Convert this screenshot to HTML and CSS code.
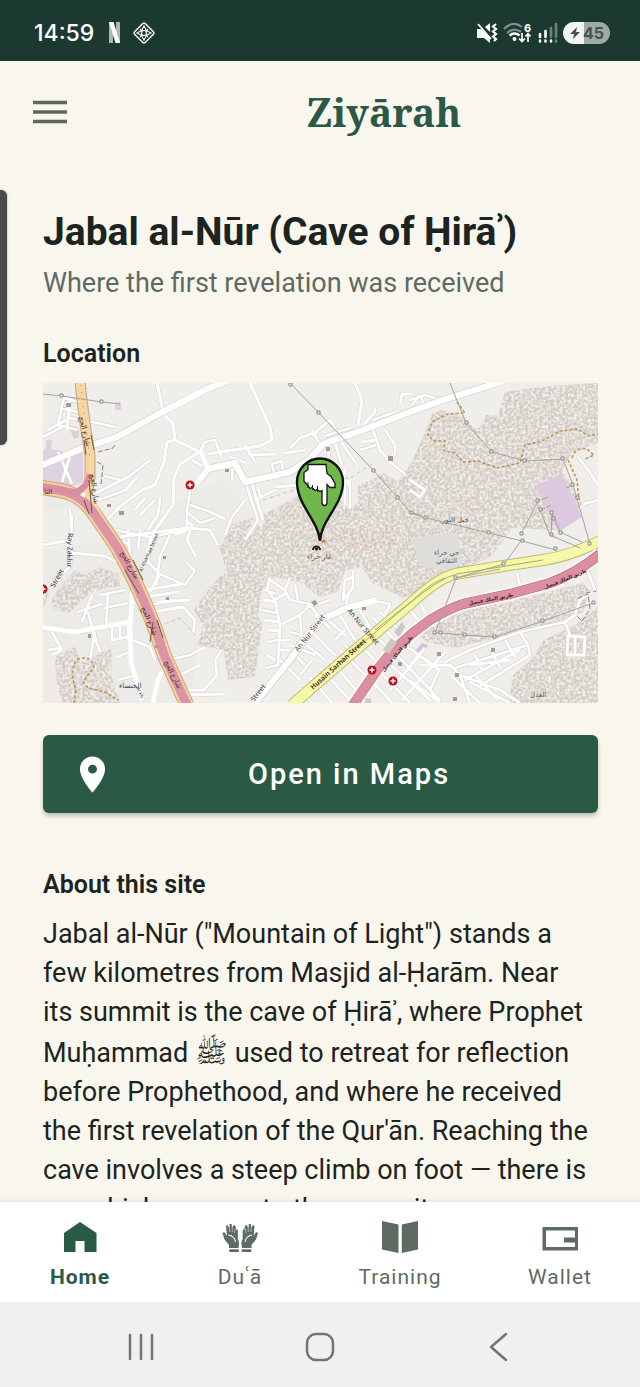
FILE: index.html
```html
<!DOCTYPE html>
<html lang="en">
<head>
<meta charset="utf-8">
<meta name="viewport" content="width=device-width, initial-scale=1">
<title>Ziyārah</title>
<link rel="stylesheet" href="styles.css">
</head>
<body>
<div class="status">
  <div class="status-side">
    <span class="clock">14:59</span>
    <svg class="ico-brand" width="14" height="24" viewBox="0 0 14 24" aria-hidden="true"><rect x="1" y="1" width="4" height="21" fill="#a9b6b2"/><rect x="8" y="1" width="4" height="21" fill="#a9b6b2"/><path d="M1 1h4.500L12 22H7.500z" fill="#fff"/></svg>
    <svg width="24" height="24" viewBox="0 0 24 24" fill="none" stroke="#f1f5f3" aria-hidden="true"><rect x="4.500" y="4.500" width="15" height="15" rx="2" transform="rotate(45 12 12)" stroke-width="1.500"/><path d="M12 5l2.500 4.500L19 12l-4.500 2.500L12 19l-2.500-4.500L5 12l4.500-2.500zM8 8l8 8M16 8l-8 8" stroke-width="1.100"/><circle cx="12" cy="12" r="2.500" fill="#1b3930" stroke-width="1.200"/></svg>
  </div>
  <div class="status-side status-right">
    <svg width="22" height="22" viewBox="0 0 22 22" aria-hidden="true"><path d="M1 7h4l9 9v5l-6-5H1z M9 5l5-4v9z" fill="#fff"/><path d="M2 2l13 15" stroke="#fff" stroke-width="1.800"/><path d="M20 2l-3 2.500 3 2.500-3 2.500 3 2.500-3 2.500 3 2.500-2 2" stroke="#fff" stroke-width="2.200" fill="none"/></svg>
    <svg width="30" height="24" viewBox="0 0 30 24" fill="none" aria-hidden="true"><path d="M1 8q9-9 18-2M4 12q7-6 14-1" stroke="#7c918b" stroke-width="2.200"/><path d="M6.500 14.500q5-4 10 0" stroke="#fff" stroke-width="2.400"/><circle cx="11.500" cy="18" r="2" fill="#fff"/><path d="M19 12v8m-3-2.500l3 3 3-3M25 21v-8m-2.500 2.500l2.500-3 2.500 3" stroke="#fff" stroke-width="1.700"/><text class="wifi-gen" x="21" y="11">6</text></svg>
    <svg width="20" height="22" viewBox="0 0 20 22" stroke-width="2.600" stroke-linecap="round" aria-hidden="true"><path d="M2 12v3M7.500 9v6" stroke="#fff"/><path d="M13 6v9M18 2v13" stroke="#6b827b"/><path d="M2 18.500v1M7.500 18.500v1M13 18.500v1" stroke="#fff"/><path d="M18 18.500v1" stroke="#6b827b"/></svg>
    <span class="battery"><svg width="12" height="14" viewBox="0 0 12 14" aria-hidden="true"><path d="M8 1L1 8h4l-1 5 7-7H7z" fill="#4c504e"/></svg>45</span>
  </div>
</div>

<header class="topbar">
  <button class="menu" type="button" aria-label="Menu"><svg width="34" height="24" viewBox="0 0 34 24"><path d="M0 2.500h34M0 12h34M0 21.500h34" stroke="#5a695f" stroke-width="3.500"/></svg></button>
  <h1 class="brand">Ziyārah</h1>
</header>
<div class="edge-handle"></div>

<main class="page">
  <h2 class="title">Jabal al-Nūr (Cave of Ḥirāʾ)</h2>
  <p class="subtitle">Where the first revelation was received</p>
  <h3 class="section">Location</h3>
  <svg class="map" viewBox="43 383 555 320" role="img" aria-label="Map of Jabal al-Nur">
    <defs>
      <filter id="rock" x="0" y="0" width="100%" height="100%">
        <feTurbulence type="fractalNoise" baseFrequency=".35" numOctaves="2" seed="4" result="n"/>
        <feColorMatrix in="n" values="0 0 0 0 .88  0 0 0 0 .855  0 0 0 0 .83  3 0 0 0 -1.100" result="c"/>
        <feComposite in="c" in2="SourceGraphic" operator="in" result="d"/>
        <feMerge><feMergeNode in="SourceGraphic"/><feMergeNode in="d"/></feMerge>
      </filter>
      <path id="redroad" d="M353 705L377 670Q398 642 430 620Q450 608 463 604L510 594L550 583Q575 574 600 554"/>
      <path id="yellowroad" d="M292 705L353 652L410 604Q438 578 455 574L503 566L543 560Q570 556 600 541"/>
      <path id="ring" d="M40 487L63 491Q82 496 93 512L117 547Q137 583 153 623L165 657L187 705"/>
      <g id="clinic"><circle r="4.500" fill="#b5121b"/><path d="M-2.500 0h5M0-2.500v5" stroke="#fff" stroke-width="1.500"/></g>
    </defs>
    <path d="M43 383h555v320H43z" fill="#f0eeea"/>
    <path d="M43 430h40v80h-40zM43 550l70-10 30 50 45 113H43zM180 500l40-20 40 40-60 110-10 73h-25l-50-150z" fill="#ecebe7"/>
    <g fill="#d3cbc4" filter="url(#rock)">
      <path d="M220 548L232 524L252 518L262 530L264 514L300 495L338 497L350 510L358 502V486L384 473L398 482L412 462L426 430L432 414L442 410L462 416L478 432L486 415H498L505 392L550 386L598 383V443L572 452L562 470L582 504L560 530L512 528L492 556L460 570L430 585L404 598L372 583L362 567L345 570L338 592L318 597L303 583L275 577L262 590L258 615L262 625L255 677L228 680L224 650L198 645L203 625L194 610L208 590L226 570Z"/>
      <path d="M415 634L435 622L470 608L540 594L583 583L590 591L583 612L556 622L520 632L488 640L455 648L428 642Z"/>
      <path d="M598 606L577 624L544 640L530 661L513 675L509 703H598Z"/>
      <path d="M58 590L75 570L85 575L100 567L118 574L120 586L104 588L92 592L80 602L69 613L54 610L52 600Z"/>
      <path d="M55 657L75 646L80 662L95 656L112 648L111 675L120 703H63L57 686Z"/>
      <path d="M43 583l8 8-8 16z"/>
    </g>
    <path d="M43 450h16l14 6 10 -8v34q-10 5 -18 5h-22zM46 440h6l-1 10h-5zM115 402h6v8h-6z" fill="#ddd2e0"/>
    <path d="M536 485L562 474L582 517L558 532Z" fill="#dcc9df"/>
    <path d="M414 652l8-9 6 2-8 12z" fill="#d2c4dc"/>
    <path d="M412 540l20-5 26-1 4 28-12 10-30-6z" fill="#dfddda"/>
    <path d="M68 425l6 14 5-2v-9z" fill="#d9d0cc"/>

    <g fill="none" stroke="#d5d2cf" stroke-width="4" stroke-linejoin="round">
      <path id="streets" d="M157 383L163 412M162 412L173 424L175 440L200 452M175 440L167 442L164 462L155 485L142 490L118 508L107 520M200 452L180 464L174 478L173 505L155 530L147 552M197 476L190 490L187 512L200 523L215 518M190 505L208 511L225 519M187 512L187 530L175 535M187 528L120 537M187 528L210 530L218 545M55 395L78 402M60 408L78 412M64 396L58 425L78 430M70 398L67 430M48 430L70 418L80 420M43 437L62 427M58 452L72 484M72 450L62 482M83 420L115 427M96 493L128 477L150 460M98 500L126 490L137 477M104 476L120 480M135 510L145 498M160 497L158 515L148 530M140 515L155 500M200 452L205 442L215 440L222 458M208 454L220 452M202 466L192 460M70 510L72 540M43 545L70 540M72 553L104 556M43 590L70 567L72 547M104 556L125 565M72 515L71 548M105 535L130 545M115 530L150 537L186 530M128 530L130 555M140 530L138 550M150 537L148 562L160 574L185 585L195 571L187 563M170 535L160 556L156 585M185 520L192 525L187 540L196 557M160 574L150 592M145 590L182 584M146 597L178 592M149 605L175 600M152 612L183 607L195 620L193 634M157 602L190 600M43 628L80 632L130 622M77 612L102 604M82 622L92 595M88 612L94 635L100 652M95 632L90 660M52 632L62 650L52 655M100 595L125 590M104 608L128 603M108 592L106 628M112 640L133 636M112 627V642M120 622V638M128 622V640M48 650L62 648M118 680L132 676M117 657L130 652M132 640L150 647L155 660M168 660L190 655L205 647M180 675L200 665M185 690L204 690L217 675L215 660L222 650M168 665L158 680M185 695L225 694M250 383L270 427L272 440L260 446L220 452M220 452L248 448L250 455L275 454M245 445L255 462M230 457L246 463M272 464L282 461L283 472M275 476L272 464M285 453L305 450M290 448L300 438L316 432L330 420L336 430M312 430L320 445M330 445L328 460M335 443L342 465M340 440L357 465M325 436L350 428M318 431L312 435M355 383L362 400L358 425M363 425L375 412V408M373 420L395 412M373 430L380 450L387 458L395 455V445L385 430M360 450L376 445M362 442L375 440M385 458L405 474M400 403L402 394H410M246 484L258 520L245 540M252 484L263 520M245 500L232 517L225 535M255 500L275 490M260 496L258 487M245 484L233 465L232 480M275 487L300 485M345 470V505M350 480V508M340 468L350 487M410 400L425 395L435 398L436 406M412 405L420 395M424 408L421 395M410 480L425 490L420 497L410 490M270 577L267 590L275 600L280 625L278 665M265 590L276 594M264 600L276 602M262 610L277 613M264 620L279 622M268 630L279 631M268 642L278 640M267 655L275 660M270 580L285 590L290 600L315 605L330 600M285 590L290 578M298 600L295 585M275 600L287 592M280 625L300 615L310 605L320 618M300 615L302 640M290 632L302 635M290 645L315 655M280 660L300 680M295 655L305 665M300 675L312 660M278 665L265 668M280 640H290M280 650H290M353 570V588L343 600L345 580L353 577M350 590L345 608M370 600L390 604L385 615M355 615L375 645M340 615L355 640M360 610L376 638M328 620L345 635M335 640L345 630M315 615L330 628M310 630L335 655M307 645L325 660M340 650L380 690M330 660L365 700M320 668L350 700M310 677L332 703M300 688L312 703M365 625L385 645M373 618L395 640M380 612L402 632M345 645L355 655M355 640L375 660M385 660L430 700M392 650L440 700M400 642L440 670M380 672L410 703M373 682L392 703M390 690L420 655M402 700L445 652M410 665L425 648M420 665L450 665L460 675L500 690M445 662L470 650L520 632L565 622L570 635M455 668L528 645L520 632M440 668L430 690L440 703M450 675L480 703M460 675L470 703M470 682L510 703M480 686L530 655L528 645M475 655L482 670M490 648L500 667M505 640L515 657M465 680L520 650M470 665L510 660M410 680L440 703M568 635L567 655H584L585 637L568 636M575 637V655M565 622L575 615L580 600L595 590L587 570M517 573L520 586M570 545L598 560M584 504L598 500M578 457L588 470L598 485M420 603L428 618M410 610L420 622M475 675L498 700M500 690L520 703"/>
    </g>
    <g fill="none" stroke-width="2.800" stroke-linejoin="round"><use href="#streets" class="street-fill"/></g>
    <g fill="none" stroke="#fff" stroke-width="2.800" stroke-linejoin="round"><path d="M157 383L163 412M162 412L173 424L175 440L200 452M175 440L167 442L164 462L155 485L142 490L118 508M200 452L180 464L174 478L173 505L155 530L147 552M250 383L270 427L272 440L260 446L220 452M355 383L362 400L358 425"/></g>
    <g fill="none" stroke="#c9c5c2" stroke-width="7.500" stroke-linejoin="round"><path d="M40 466L83 448L117 437L162 412L207 389L227 381M196 484L208 469L235 463L245 482L290 472L310 459L323 444L363 430L410 412L443 400L504 381"/><path d="M253 705L290 660L306 637L322 619L347 608L377 600"/></g>
    <g fill="none" stroke="#fff" stroke-width="6.500" stroke-linejoin="round"><path d="M40 466L83 448L117 437L162 412L207 389L227 381M196 484L208 469L235 463L245 482L290 472L310 459L323 444L363 430L410 412L443 400L504 381"/><path d="M253 705L290 660L306 637L322 619L347 608L377 600"/><path d="M133 588L130 625L131 662L142 700M40 627L75 632L130 622M168 660L158 680L153 703M200 450L208 469" stroke-width="4.500"/></g>

    <g fill="none" stroke-linejoin="round">
      <path d="M80 381L82 400L86 430L90 455V478L87 495" stroke="#bfa582" stroke-width="11"/>
      <use href="#ring" stroke="#c4a882" stroke-width="15"/>
      <use href="#ring" stroke="#f6cf9c" stroke-width="13"/>
      <path d="M80 381L82 400L86 430L90 455V478L87 495L100 520" stroke="#f8d6a3" stroke-width="9"/>
      <use href="#ring" stroke="#dc94a5" stroke-width="9"/>
      <path d="M40 487L75 492Q88 488 90 474" stroke="#d98da0" stroke-width="6"/>
      <path d="M81 385L83 405L87 435L90 460" stroke="#b08a52" stroke-dasharray="1 6"/>
      <path d="M91 435l3 15M84 440l2 15M89 480l3 33M84 500l5 14M125 570l14 24M133 560l10 20M153 622l-3 20M157 620l6 18" stroke="#6b5744" stroke-width="1"/>
      <path d="M80 495l5-3v6z" fill="#fff"/>
      <use href="#yellowroad" stroke="#b9bd71" stroke-width="12"/>
      <use href="#yellowroad" stroke="#f6f7a9" stroke-width="10"/>
      <path d="M340 662L410 603Q440 578 457 574L543 560M375 630L412 601Q430 583 445 578" stroke="#a4af65" stroke-width="1"/>
      <use href="#redroad" stroke="#faf7f5" stroke-width="14"/>
      <use href="#redroad" stroke="#b0667a" stroke-width="10"/>
      <use href="#redroad" stroke="#dc8fa1" stroke-width="9"/>
    </g>

    <g fill="none" stroke="#a7a39f" stroke-width="1">
      <path d="M43 394L62 396L102 402L120 404M290 383L319 413L374 471L398 498L411 513L426 518L489 533L522 541L556 550M450 383L466 423L492 452L525 461L563 459L573 485L590 544M538 501L533 511L521 534M540 510L550 535L580 548M552 513L551 535M552 513L560 532L582 542M521 541L504 564L456 578L435 633L440 633L464 635L495 637L543 621L593 603M411 513L422 515M538 501L548 497M541 510l10-5M566 488l8-3M456 578L500 569"/>
    </g>
    <g fill="#f0ece8" stroke="#8c8885" stroke-width="1">
      <path d="M60 394h3v3h-3zM100 400h3v3h-3zM289 383h3v3h-3zM317 411h3v3h-3zM372 469h3v3h-3zM396 496h3v3h-3zM410 511h3v3h-3zM424 516h3v3h-3zM487 531h3v3h-3zM521 539h3v3h-3zM554 547h3v3h-3zM465 421h3v3h-3zM490 450h3v3h-3zM523 459h3v3h-3zM561 457h3v3h-3zM571 483h3v3h-3zM576 496h3v3h-3zM536 499h3v3h-3zM539 508h3v3h-3zM550 511h3v3h-3zM552 517h3v3h-3zM550 533h3v3h-3zM559 531h3v3h-3zM520 532h3v3h-3zM588 542h3v3h-3zM502 562h3v3h-3zM454 576h3v3h-3zM433 631h3v3h-3zM439 631h3v3h-3zM463 633h3v3h-3zM493 635h3v3h-3zM541 619h3v3h-3zM592 601h3v3h-3z"/>
    </g>
    <g fill="none" stroke="#b99656" stroke-width="1.500" stroke-dasharray="3 2">
      <path d="M457 402L465 413L448 414L432 422L428 435L434 441H445L444 451L455 453L463 462L478 461L497 468L520 463L525 445L542 441L560 431L578 429L588 436L598 434M572 458Q575 447 587 449L594 455L585 459M568 460L577 480L579 500M74 703L76 690Q68 668 78 659Q92 655 94 667L83 682L88 688L105 692L118 700"/>
    </g>
    <g fill="none" stroke="#c9c4bf" stroke-dasharray="4 3"><path d="M263 500L300 488L350 478L375 462M165 624L180 618L195 635M463 431L500 425L560 400"/></g>
    <path d="M98 452l15-4 2 -3M97 462l6 3-2 20M578 598l10-4 2 15-8 12-5-5M586 593l10-2" fill="none" stroke="#85817e" stroke-dasharray="5 2"/>
    <g fill="none" stroke="#e0a69a" stroke-width="1" stroke-dasharray="2 3"><path d="M325 541l20-4 15-5 5 10 20-6 10 8M340 552l12-8 12 7 14-9 20 2M350 534l8 10 14 3M383 545l-10 8"/></g>
    <g fill="#a49b94"><path d="M66 403h5v4h-5zM119 511h5v4h-5zM107 504h4v3h-4zM225 469h4v3h-4zM326 447h4v4h-4zM388 456h5v5h-5zM311 602l4-2 3 4-4 2zM362 607h4v3h-4zM163 556h3v3h-3zM166 597h3v3h-3zM155 645h3v3h-3zM88 634h3v4h-3zM437 652h4v4h-4zM491 648h4v4h-4zM455 673h4v4h-4zM453 697h4v4h-4zM398 662h4v4h-4z"/><path d="M383 650l8-12 6 4-8 12zM394 632l8-10 3 5-6 10zM365 698l6 1v4h-6z" fill="#cfc8c2"/></g>

    <g class="map-label">
      <text transform="translate(79 417) rotate(76)">شارع الحج</text>
      <text transform="translate(90 474) rotate(82)">شارع الحج</text>
      <text transform="translate(120 553) rotate(60)">شارع الحج</text>
      <text transform="translate(141 608) rotate(66)">شارع الحج</text>
      <text transform="translate(164 662) rotate(63)">شارع الحج</text>
      <text x="44" y="494">الثا</text>
      <text transform="translate(68 533) rotate(92)">Ray Zakhir</text>
      <text transform="translate(64 571) rotate(120) scale(-1)" text-anchor="end">Street</text>
      <text class="small" transform="translate(142 572) rotate(-66)">Al Khansaa Street</text>
      <text class="small" transform="translate(136 688) rotate(66)">Al Kh</text>
      <text x="119" y="688">الخنساء</text>
      <text transform="translate(298 652) rotate(-52)">An Nur Street</text>
      <text transform="translate(347 611) rotate(50)">An Nur Street</text>
      <text transform="translate(254 702) rotate(-52)">Street</text>
      <text class="strong" transform="translate(313 690) rotate(-42)">Husain Sarhan Street</text>
      <text class="strong small" transform="translate(384 672) rotate(-50)">طريق الملك فيصل</text>
      <text class="strong small" transform="translate(469 605) rotate(-11)">طريق الملك فيصل</text>
      <text class="strong small" transform="translate(545 589) rotate(-22)">طريق الملك فيصل</text>
      <text class="dim" x="442" y="522">جبل النور</text>
      <text class="dim" x="307" y="559">غار حراء</text>
      <text class="dim" x="434" y="555">حي حراء</text>
      <text class="dim" x="436" y="563">الثقافي</text>
      <text class="dim" x="530" y="697">العدل</text>
    </g>
    <use href="#clinic" x="190" y="485"/><use href="#clinic" x="43" y="589"/><use href="#clinic" x="372" y="670"/><use href="#clinic" x="393" y="681"/>
    <path d="M312 550a4.500 4.500 0 0 1 9 0h-2a2.500 2.500 0 0 0-5 0z" fill="#1d1d1d"/><circle cx="316.500" cy="549" r="1.500" fill="#1d1d1d"/><path d="M321 542l3-3 2 4z" fill="#b7733b"/>
    <path d="M320 541C318 520 297 505 297 482a23 23.500 0 0 1 46 0C343 505 321 520 320 541Z" fill="#6fb64b" stroke="#111" stroke-width="2.400"/>
    <path d="M308 464.500h18l1 9 4 3 4 7v4h-5l-3-3v18q0 3-2.500 3t-2.500-3v-12l-2 1-3-2-2 1-3-3-2 1-3-4-3-3v-9l4-3z" fill="#fff" stroke="#151515" stroke-width="1.300"/>
    <path d="M308 482v6M312.500 485v5M317.500 486v6" stroke="#222" stroke-width="1"/>
  </svg>
  <button class="open-maps" type="button">
    <svg width="43" height="43" viewBox="0 0 24 24" aria-hidden="true"><path d="M12 2C8.130 2 5 5.130 5 9c0 5.250 7 13 7 13s7-7.750 7-13c0-3.870-3.130-7-7-7zm0 9.500a2.500 2.500 0 1 1 0-5 2.500 2.500 0 0 1 0 5z" fill="#fff"/></svg>
    <span class="open-label">Open in Maps</span>
  </button>
  <h3 class="section">About this site</h3>
  <p class="about">Jabal al-Nūr ("Mountain of Light") stands a few kilometres from Masjid al-Ḥarām. Near its summit is the cave of Ḥirāʾ, where Prophet Muḥammad <span class="salawat">ﷺ</span> used to retreat for reflection before Prophethood, and where he received the first revelation of the Qur'ān. Reaching the cave involves a steep climb on foot — there is no vehicle access to the summit.</p>
</main>

<nav class="tabs" aria-label="Sections">
  <a class="tab active" href="#home"><svg width="40" height="40" viewBox="0 0 40 40"><path d="M4 15L20 4l16.500 11v19h-12V23h-9v11H4z"/></svg>Home</a>
  <a class="tab" href="#dua"><svg width="40" height="40" viewBox="0 0 40 40">
    <defs><g id="hand"><path d="M9 30v-3L4.500 21.500L2.500 15q1.500-1.500 2.500 0l2 3-1-10q1.500-1.500 2.300 0L9.200 14l.3-7.500q1.500-1.500 2.300 0L12 13.500l1.200-6q1.500-1 2.200.5L15 15l1-3q1.500-1 1.800.5V21q1.500 2 1.200 5l-.5 4z"/><path d="M7 9h9l1 8H7z"/><path d="M9 8l.8 6M12.300 8v6M15.300 10l-.8 5" stroke="#fff" stroke-width=".5"/><path d="M8.500 17q6 1 7 7" fill="none" stroke="#fff" stroke-width="1.100"/><path d="M9.300 31.300h9.500V34H9.300z"/></g></defs>
    <use href="#hand"/><use href="#hand" transform="matrix(-1 0 0 1 40.500 0)"/></svg>Duʿā</a>
  <a class="tab" href="#training"><svg width="40" height="40" viewBox="0 0 40 40"><path d="M2 3l16.500 3.500V35L2 31.500zM38 3L21.800 6.500V35L38 31.500z"/></svg>Training</a>
  <a class="tab" href="#wallet"><svg width="40" height="40" viewBox="0 0 40 40"><path fill-rule="evenodd" d="M2.500 9H38v23.500H2.500zM6 12.500V29h29v-4.500H24v-5h11v-7z"/></svg>Wallet</a>
</nav>
<div class="sysnav">
  <button type="button" aria-label="Recent apps"><svg width="30" height="30" viewBox="0 0 30 30"><path d="M4 3v24M15 3v24M26 3v24"/></svg></button>
  <button type="button" aria-label="Home screen"><svg width="30" height="30" viewBox="0 0 30 30"><rect x="2" y="2" width="26" height="26" rx="9"/></svg></button>
  <button type="button" aria-label="Back"><svg width="30" height="30" viewBox="0 0 30 30"><path d="M22 2L7 15l15 13"/></svg></button>
</div>
</body>
</html>
```

FILE: styles.css
```css
* { box-sizing: border-box; }
body {
  margin: 0;
  height: 100vh;
  display: flex;
  flex-direction: column;
  position: relative;
  background: #f9f6ee;
  color: #1b241f;
  font-family: Roboto, "Noto Sans", "DejaVu Sans", sans-serif;
}
h1, h2, h3, p { margin: 0; }
button { border: 0; padding: 0; background: none; font: inherit; color: inherit; }
svg { display: block; }

.status {
  flex: none;
  height: 61px;
  padding: 4px 30px 0 34px;
  display: flex;
  justify-content: space-between;
  align-items: center;
  background: #1b3930;
  color: #fff;
}
.status-side { display: flex; align-items: center; gap: 10px; }
.status-right { gap: 5px; }
.clock { font: 500 23px/28px Inter, sans-serif; }
.ico-brand { margin-left: 4px; }
.wifi-gen { font: 700 11px Inter, sans-serif; fill: #fff; }
.battery {
  display: flex;
  align-items: center;
  gap: 2px;
  width: 47px;
  height: 22px;
  padding-left: 6px;
  border-radius: 11px;
  background: linear-gradient(90deg, #f1f4f3 45%, #9daaa6 45%);
  color: #4c504e;
  font: 700 16px/22px Inter, sans-serif;
}

.topbar {
  flex: none;
  height: 101px;
  display: grid;
  grid-template-columns: 20% 1fr;
  align-items: center;
}
.menu { justify-self: start; margin-left: 33px; }
.brand {
  text-align: center;
  color: #2a5a46;
  font: 700 39px/52px "Noto Serif", "DejaVu Serif", serif;
}
.edge-handle {
  position: absolute;
  left: 0;
  top: 190px;
  width: 7px;
  height: 255px;
  border-radius: 0 6px 6px 0;
  background: #4a4a4a;
  box-shadow: 0 0 2px #8a8a86;
}

.page {
  flex: 1;
  min-height: 0;
  overflow: hidden;
  padding: 44px 42px 0 43px;
}
.title { font-size: 39px; line-height: 52px; }
.subtitle { margin-top: 6px; font-size: 27px; line-height: 38px; color: #5d6b62; }
.section { font-size: 25px; line-height: 32px; font-weight: 600; }
.subtitle + .section { margin-top: 36px; }
.map { width: 100%; height: auto; margin-top: 13px; }
.street-fill { stroke: #fff; }
.map-label text { font: 7px "Noto Sans", "DejaVu Sans", sans-serif; fill: #3b3633; }
.map-label .strong { font-weight: 600; fill: #40222a; }
.map-label .small { font-size: 5px; }
.map-label .dim { fill: #66605c; }

.open-maps {
  width: 100%;
  height: 78px;
  margin: 32px 0 56px;
  padding: 0 14px 0 28px;
  display: flex;
  align-items: center;
  border-radius: 6px;
  background: #2a5a46;
  box-shadow: 0 3px 4px rgba(0, 0, 0, .22);
  color: #fff;
}
.open-label { flex: 1; font-size: 29px; font-weight: 500; letter-spacing: 2px; }
.about { margin-top: 14px; padding-right: 6px; font-size: 27px; line-height: 39px; }
.salawat { font-family: "DejaVu Sans", sans-serif; line-height: 41px; }

.tabs {
  flex: none;
  height: 100px;
  display: grid;
  grid-template-columns: repeat(4, 1fr);
  background: #fff;
  box-shadow: 0 -1px 4px rgba(0, 0, 0, .1);
}
.tab {
  display: flex;
  flex-direction: column;
  align-items: center;
  padding-top: 16px;
  gap: 6px;
  font-size: 21px;
  line-height: 26px;
  letter-spacing: 1px;
  text-decoration: none;
  color: #5d6b62;
}
.tab svg { fill: #5d6b62; }
.active { color: #2a5a46; font-weight: 700; }
.active svg { fill: #2a5a46; }

.sysnav {
  flex: none;
  height: 85px;
  padding: 4px 8% 0;
  display: grid;
  grid-template-columns: repeat(3, 1fr);
  place-items: center;
  background: #f0f0f3;
}
.sysnav svg { fill: none; stroke: #737376; stroke-width: 2.5; stroke-linecap: round; stroke-linejoin: round; }
```
